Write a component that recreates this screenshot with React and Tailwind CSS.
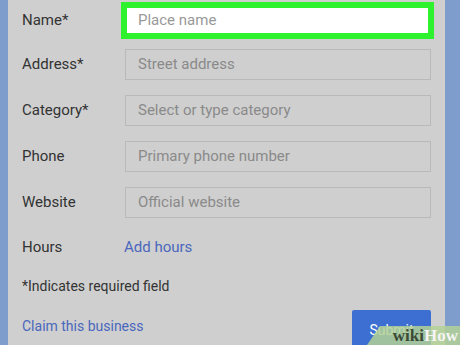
const fields = [
  { label: 'Address*', placeholder: 'Street address' },
  { label: 'Category*', placeholder: 'Select or type category' },
  { label: 'Phone', placeholder: 'Primary phone number' },
  { label: 'Website', placeholder: 'Official website' },
]

export default function App() {
  return (
    <div className="w-[460px] h-[345px] overflow-hidden flex bg-[#7f9dcc] font-['Roboto',sans-serif] relative">
      <div className="ml-[8px] w-[437px] h-full bg-[#cfcfcf]">
        {/* Name (highlighted) */}
        <div className="flex items-center pt-[2px]">
          <span className="w-[113px] pl-[14px] text-[15px] text-[#333]">Name*</span>
          <div className="w-[313px] h-[37px] border-[6px] border-[#2df22d] bg-white flex items-center pl-[11px]">
            <span className="text-[15px] text-[#999]">Place name</span>
          </div>
        </div>

        <div className="flex flex-col gap-[15px] mt-[10px]">
          {fields.map((f) => (
            <div key={f.label} className="flex items-center h-[31px] shrink-0">
              <span className="w-[117px] pl-[14px] text-[15px] text-[#333]">{f.label}</span>
              <div className="w-[306px] h-[31px] border border-[#b9b9b9] flex items-center pl-[12px]">
                <span className="text-[15px] text-[#8a8a8a]">{f.placeholder}</span>
              </div>
            </div>
          ))}
        </div>

        <div className="flex items-center h-[31px] mt-[14px]">
          <span className="w-[116px] pl-[14px] text-[15px] text-[#333]">Hours</span>
          <span className="text-[15px] text-[#4a67bd]">Add hours</span>
        </div>

        <div className="pl-[14px] mt-[13px] text-[14px] leading-[20px] text-[#333]">*Indicates required field</div>

        <div className="flex items-start justify-between mt-[14px] pr-[14px]">
          <span className="pl-[14px] pt-[6px] text-[14px] text-[#4a67bd]">Claim this business</span>
          <div className="w-[79px] h-[40px] bg-[#3c6fd1] rounded-[2px] flex justify-center pt-[10px]">
            <span className="text-[14px] text-white">Submit</span>
          </div>
        </div>
      </div>

      {/* watermark */}
      <div className="absolute left-[367px] bottom-0 w-[93px] h-[19px] bg-[#b3d197]/85 [clip-path:polygon(13px_0,100%_0,100%_100%,0_100%)] flex items-end justify-end pr-[2px]">
        <span className="font-['Liberation_Serif',serif] font-bold text-[17px] leading-[19px] text-[#3b4a34]">wiki</span>
        <span className="font-['Liberation_Serif',serif] font-bold text-[17px] leading-[19px] text-[#f4f4f4]">How</span>
      </div>
    </div>
  )
}
